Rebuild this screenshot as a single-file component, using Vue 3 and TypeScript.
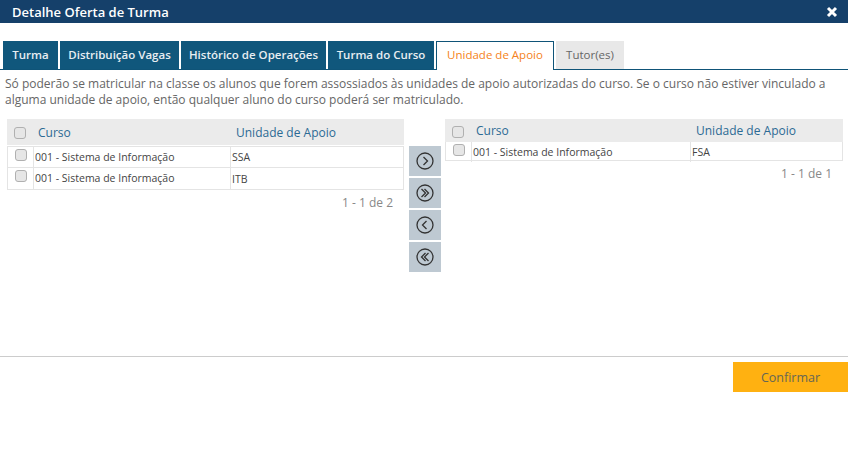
<script setup lang="ts">
interface Row { curso: string; unidade: string }
const tabs = ['Turma', 'Distribuição Vagas', 'Histórico de Operações', 'Turma do Curso', 'Unidade de Apoio', 'Tutor(es)']
const left: Row[] = [
  { curso: '001 - Sistema de Informação', unidade: 'SSA' },
  { curso: '001 - Sistema de Informação', unidade: 'ITB' },
]
const right: Row[] = [{ curso: '001 - Sistema de Informação', unidade: 'FSA' }]
const tabClass = (i: number) => (i === 4 ? 'active' : i === 5 ? 'off' : '')
</script>

<template>
  <div class="page">
    <header class="title">
      <span>Detalhe Oferta de Turma</span>
      <svg class="close" width="12" height="12" viewBox="0 0 12 12"><path d="M2 2 10 10M10 2 2 10" stroke="#fff" stroke-width="3" /></svg>
    </header>
    <nav class="tabs">
      <div v-for="(t, i) in tabs" :key="t" class="tab" :class="tabClass(i)">{{ t }}</div>
    </nav>
    <p class="note">Só poderão se matricular na classe os alunos que forem assossiados às unidades de apoio autorizadas do curso. Se o curso não estiver vinculado a alguma unidade de apoio, então qualquer aluno do curso poderá ser matriculado.</p>
    <section class="picker">
      <div class="panel lpanel">
        <div class="thead"><span class="ck"><input type="checkbox" /></span><span class="c1">Curso</span><span class="c2">Unidade de Apoio</span></div>
        <div v-for="r in left" :key="r.unidade" class="row"><span class="ck"><input type="checkbox" /></span><span class="c1">{{ r.curso }}</span><span class="c2">{{ r.unidade }}</span></div>
        <div class="pager">1 - 1 de 2</div>
      </div>
      <div class="moves">
        <button class="mv" aria-label="Mover"><svg width="20" height="20" viewBox="0 0 20 20"><circle cx="10" cy="10" r="8" /><path d="M8.5 6 12.5 10 8.5 14" /></svg></button>
        <button class="mv" aria-label="Mover todos"><svg width="20" height="20" viewBox="0 0 20 20"><circle cx="10" cy="10" r="8" /><path d="M6.5 6 10.5 10 6.5 14M9.5 6 13.5 10 9.5 14" /></svg></button>
        <button class="mv" aria-label="Remover"><svg width="20" height="20" viewBox="0 0 20 20"><circle cx="10" cy="10" r="8" /><path d="M11.5 6 7.5 10 11.5 14" /></svg></button>
        <button class="mv" aria-label="Remover todos"><svg width="20" height="20" viewBox="0 0 20 20"><circle cx="10" cy="10" r="8" /><path d="M13.5 6 9.5 10 13.5 14M10.5 6 6.5 10 10.5 14" /></svg></button>
      </div>
      <div class="panel rpanel">
        <div class="thead"><span class="ck"><input type="checkbox" /></span><span class="c1">Curso</span><span class="c2">Unidade de Apoio</span></div>
        <div v-for="r in right" :key="r.unidade" class="row"><span class="ck"><input type="checkbox" /></span><span class="c1">{{ r.curso }}</span><span class="c2">{{ r.unidade }}</span></div>
        <div class="pager">1 - 1 de 1</div>
      </div>
    </section>
    <footer class="foot"><button class="confirm">Confirmar</button></footer>
  </div>
</template>

<style scoped>
.page { width: 848px; height: 466px; background: #fff; font-family: "Open Sans", "Noto Sans", sans-serif; font-size: 12px; color: #666; overflow: hidden; }
.title { height: 23px; background: #15406a; color: #fff; font-size: 13px; font-weight: 600; display: flex; align-items: center; justify-content: space-between; padding: 0 10px 0 12px; }
.tabs { margin-top: 18px; height: 28px; display: flex; gap: 2px; padding-left: 3px; border-bottom: 1px solid #0f5478; box-sizing: content-box; }
.tab { height: 28px; background: #10577c; color: #e8eef2; font-weight: 600; font-size: 11.5px; line-height: 28px; text-align: center; box-sizing: border-box; }
.tab:nth-child(1) { width: 55px; }
.tab:nth-child(2) { width: 119px; }
.tab:nth-child(3) { width: 145px; }
.tab:nth-child(4) { width: 106px; }
.tab.active { width: 118px; height: 29px; background: #fff; color: #f58220; font-weight: 400; border: 1px solid #0f5478; border-bottom: 0; line-height: 26px; }
.tab.off { width: 68px; background: #e8e8e8; color: #666; font-weight: 400; }
.note { margin: 6px 5px 0; line-height: 16px; font-size: 12px; color: #666; width: 830px; height: 32px; }
.picker { display: flex; align-items: flex-start; margin-top: 11px; padding-left: 7px; }
.panel { width: 397px; }
.rpanel { width: 398px; margin-left: 4px; }
.thead, .row { display: grid; grid-template-columns: 26px 197px 1fr; align-items: center; }
.thead { height: 26px; background: #ebebeb; color: #2b6a94; }
.rpanel .thead { height: 23px; grid-template-columns: 26px 219px 1fr; }
.row { height: 22px; border: 1px solid #e4e4e4; border-top: 0; box-sizing: border-box; color: #444; font-size: 10.5px; }
.rpanel .row { height: 19px; grid-template-columns: 26px 219px 1fr; }
.lpanel .row:nth-of-type(2) { border-top: 1px solid #e4e4e4; height: 22px; margin-top: 1px; }
.row .ck { height: 100%; border-right: 1px solid #e4e4e4; display: flex; padding-left: 7px; box-sizing: border-box; }
.thead .ck { display: flex; padding-left: 7px; }
.row .c1 { height: 100%; border-right: 1px solid #e4e4e4; line-height: 20px; padding-left: 1px; }
.row .c2 { padding-left: 1px; }
.thead .c1 { padding-left: 5px; }
.thead .c2 { padding-left: 6px; }
.ck input { appearance: none; width: 12px; height: 12px; margin: 2px 0 0; background: #e6e6e6; border: 1px solid #b0b0b0; border-radius: 3px; }
.pager { text-align: right; padding: 4px 11px 0 0; color: #888; }
.moves { width: 32px; margin: 27px 0 0 5px; display: flex; flex-direction: column; gap: 2px; }
.mv { width: 32px; height: 30px; background: #bec9d2; border: 0; padding: 0; display: flex; align-items: center; justify-content: center; }
.mv circle, .mv path { fill: none; stroke: #333; stroke-width: 1.3; }
.foot { position: absolute; left: 0; top: 356px; width: 848px; border-top: 1px solid #ccc; display: flex; justify-content: flex-end; padding-top: 5px; }
.confirm { width: 115px; height: 30px; background: #ffb111; border: 0; color: #665; font-family: inherit; font-size: 12.5px; }
</style>
